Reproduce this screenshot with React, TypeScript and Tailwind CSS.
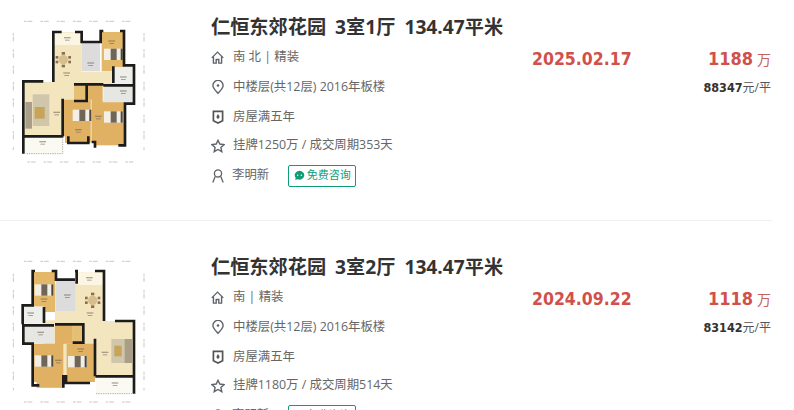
const baseFont = "font-['Open_Sans','Noto_Sans_CJK_SC',sans-serif]";
const numFont = "font-['DejaVu_Sans_Condensed','DejaVu_Sans',sans-serif]";

function HouseIcon() {
  return (
    <svg viewBox="0 0 14 14" className="h-[13px] w-[13px]" fill="none" stroke="#5f6368" strokeWidth="1.500">
      <path d="M.8 7.400 7 1.200l6.200 6.200" />
      <path d="M2.600 5.800V13h3V9.200h2.800V13h3V5.800" />
    </svg>
  );
}

function PinIcon() {
  return (
    <svg viewBox="0 0 14 14" className="h-[14px] w-[14px]" fill="none" stroke="#5f6368" strokeWidth="1.400">
      <path d="M7 13.300C4.400 10.400 1.900 8.200 1.900 5.500a5.100 5.100 0 0 1 10.200 0c0 2.700-2.500 4.900-5.100 7.800Z" />
      <circle cx="7" cy="5.500" r="1.300" fill="#5f6368" stroke="none" />
    </svg>
  );
}

function BadgeIcon() {
  return (
    <svg viewBox="0 0 14 14" className="h-[14px] w-[14px]" fill="none" stroke="#555" strokeWidth="1.700">
      <path d="M2.400 1.300h9.200v9.500L7 13 2.400 10.800Z" />
      <path d="M7 3.800 8.700 7 7 9.200 5.300 7Z" fill="#555" stroke="none" />
    </svg>
  );
}

function StarIcon() {
  return (
    <svg viewBox="0 0 14 14" className="h-[14px] w-[14px]" fill="none" stroke="#5f6368" strokeWidth="1.400">
      <path d="M7 1.300 8.800 5l4.300.5-3.200 2.900.9 4.300L7 10.500l-3.800 2.200.9-4.300L.9 5.500 5.200 5Z" />
    </svg>
  );
}

function UserIcon() {
  return (
    <svg viewBox="0 0 14 14" className="h-[14px] w-[14px]" fill="none" stroke="#5f6368" strokeWidth="1.300">
      <circle cx="7" cy="4.400" r="3.600" />
      <path d="M4.200 7.400 1.800 13.500M9.800 7.400l2.400 6.100" />
    </svg>
  );
}

function ChatIcon() {
  return (
    <svg viewBox="0 0 12 12" className="h-[11px] w-[11px] shrink-0">
      <path d="M6 .8a5.200 4.900 0 1 1-2.300 9.300L1.200 11l.7-2.300A5.200 4.900 0 0 1 6 .8Z" fill="#0f9d78" />
      <circle cx="4" cy="5.700" r=".8" fill="#fff" />
      <circle cx="8" cy="5.700" r=".8" fill="#fff" />
    </svg>
  );
}

function Walls({ d }: { d: string }) {
  return <path d={d} fill="none" stroke="#1c1c1c" strokeWidth="8" />;
}

function Bed({ x, y }: { x: number; y: number }) {
  return (
    <g>
      <rect x={x} y={y} width="56" height="34" fill="#f3efe6" />
      <rect x={x + 20} y={y} width="18" height="34" fill="#6f6658" />
      <rect x={x + 50} y={y} width="6" height="34" fill="#4b463e" />
    </g>
  );
}

function Table({ cx, cy }: { cx: number; cy: number }) {
  return (
    <g fill="#8b6f4c">
      <rect x={cx - 5} y={cy - 23} width="10" height="8" />
      <rect x={cx - 5} y={cy + 15} width="10" height="8" />
      <rect x={cx - 23} y={cy - 11} width="8" height="8" />
      <rect x={cx + 15} y={cy - 11} width="8" height="8" />
      <rect x={cx - 23} y={cy + 3} width="8" height="8" />
      <rect x={cx + 15} y={cy + 3} width="8" height="8" />
      <circle cx={cx} cy={cy} r="14" fill="#d8bd8f" />
    </g>
  );
}

// blurred room name in the plan, unreadable in the reference
function RoomMark({ x, y }: { x: number; y: number }) {
  return (
    <g fill="#6b6255" opacity="0.55">
      <rect x={x} y={y} width="20" height="4" />
      <rect x={x + 3} y={y + 8} width="14" height="3" />
    </g>
  );
}

// both plans are traced from the zoomed reference, 3 units to a pixel
function PlanOne() {
  return (
    <svg viewBox="30 20 450 450" className="h-[150px] w-[150px] blur-[0.4px]">
      <g stroke="#aaa" strokeWidth="2" strokeDasharray="8 3 14 24">
        <path d="M72 33H400M82 455H400M40 68V420M432 68V420" />
      </g>
      <path d="M160 66H245V185H340V225H262V270H375V405H285V395H265V398H195V378H70V215H160Z" fill="#f3e6bf" />
      <rect x="162" y="68" width="80" height="36" fill="#fbf6e4" />
      <rect x="245" y="95" width="55" height="88" fill="#dcdcdc" />
      <path d="M305 65H372V183H305Z" fill="#e3b868" />
      <rect x="338" y="170" width="64" height="50" fill="#eeeeea" />
      <rect x="310" y="226" width="90" height="50" fill="#e6e6e2" />
      <path d="M188 268H272V398H195V378H188Z" fill="#e0b163" />
      <path d="M262 225H308V276H372V405H285V395H275V268H262Z" fill="#e0b163" />
      <rect x="222" y="225" width="36" height="48" fill="#e5bf74" />
      <rect x="72" y="378" width="115" height="52" fill="#fbfaf2" />
      <rect x="98" y="252" width="50" height="95" fill="#cfc6ac" />
      <rect x="104" y="290" width="30" height="35" fill="#c8a45a" />
      <rect x="76" y="275" width="20" height="80" fill="#a99f88" />
      <Table cx={190} cy={148} />
      <Bed x={312} y={115} />
      <Bed x={218} y={298} />
      <Bed x={312} y={303} />
      <RoomMark x={192} y={80} />
      <RoomMark x={190} y={186} />
      <RoomMark x={262} y={156} />
      <RoomMark x={325} y={90} />
      <RoomMark x={160} y={304} />
      <RoomMark x={225} y={356} />
      <RoomMark x={285} y={316} />
      <RoomMark x={118} y={392} />
      <RoomMark x={360} y={198} />
      <RoomMark x={360} y={240} />
      <Walls d="M190 378H70V430M70 378V213H130M160 215V65H185M225 65H245V95H302V62H310M360 62H372V165H402V222M340 168V218M310 225H402V280H375V405H355M285 412V395H275M265 378V398H205V378M188 378V265M222 222H260V272H222M262 222H310" />
      <path d="M80 430H188V378" fill="none" stroke="#8a8a80" strokeWidth="2" strokeDasharray="4 3" />
    </svg>
  );
}

function PlanTwo() {
  return (
    <svg viewBox="30 20 450 450" className="h-[150px] w-[150px] blur-[0.4px]">
      <g stroke="#aaa" strokeWidth="2" strokeDasharray="8 3 14 24">
        <path d="M72 33H400M72 455H400M40 70V420M432 70V420" />
      </g>
      <path d="M230 66H312V212H402V378H285V395H200V378H190V412H110V395H98V280H130V210H165V100H230Z" fill="#f3e6bf" />
      <rect x="230" y="66" width="78" height="38" fill="#fbf6e4" />
      <rect x="168" y="92" width="58" height="90" fill="#dcdcdc" />
      <path d="M98 65H165V185H98Z" fill="#e3b868" />
      <rect x="70" y="168" width="62" height="52" fill="#eeeeea" />
      <rect x="72" y="226" width="90" height="52" fill="#e6e6e2" />
      <path d="M165 225H218V280H190V412H110V395H98V280H165Z" fill="#e0b163" />
      <path d="M200 280H285V395H200Z" fill="#e0b163" />
      <rect x="218" y="225" width="34" height="52" fill="#e5bf74" />
      <rect x="288" y="378" width="112" height="52" fill="#fbfaf2" />
      <rect x="334" y="266" width="50" height="72" fill="#cfc6ac" />
      <rect x="343" y="286" width="22" height="32" fill="#c8a45a" />
      <rect x="374" y="266" width="22" height="72" fill="#a99f88" />
      <Table cx={278} cy={150} />
      <Bed x={104} y={102} />
      <Bed x={104} y={315} />
      <Bed x={204} y={317} />
      <RoomMark x={258} y={80} />
      <RoomMark x={260} y={186} />
      <RoomMark x={192} y={132} />
      <RoomMark x={122} y={144} />
      <RoomMark x={305} y={304} />
      <RoomMark x={165} y={328} />
      <RoomMark x={232} y={294} />
      <RoomMark x={335} y={396} />
      <RoomMark x={82} y={186} />
      <RoomMark x={112} y={244} />
      <Walls d="M286 378H402V430M402 378V212H345M312 212V62H285M230 100V62H225M225 88H168V62H155M105 62H98V165H68V222M132 170V218M162 225H70V280H98V405H118M190 412V378H198V398H270M285 378V265M218 222H250V277H218M165 222H218" />
      <path d="M288 430H396" fill="none" stroke="#8a8a80" strokeWidth="2" strokeDasharray="4 3" />
    </svg>
  );
}

type Listing = {
  title: string;
  facing: string;
  floor: string;
  tag: string;
  deal: string;
  agent: string;
  date: string;
  price: string;
  perMeter: string;
  plan: React.ReactNode;
};

const listings: Listing[] = [
  {
    title: "仁恒东郊花园 3室1厅 134.47平米",
    facing: "南 北 | 精装",
    floor: "中楼层(共12层) 2016年板楼",
    tag: "房屋满五年",
    deal: "挂牌1250万 / 成交周期353天",
    agent: "李明新",
    date: "2025.02.17",
    price: "1188",
    perMeter: "88347",
    plan: <PlanOne />,
  },
  {
    title: "仁恒东郊花园 3室2厅 134.47平米",
    facing: "南 | 精装",
    floor: "中楼层(共12层) 2016年板楼",
    tag: "房屋满五年",
    deal: "挂牌1180万 / 成交周期514天",
    agent: "李明新",
    date: "2024.09.22",
    price: "1118",
    perMeter: "83142",
    plan: <PlanTwo />,
  },
];

function InfoRow({ icon, text, height }: { icon: React.ReactNode; text: string; height: string }) {
  return (
    <div className={`flex items-center ${height}`}>
      <span className="w-[22px] shrink-0">{icon}</span>
      <span className="text-[12.400px] text-[#666]">{text}</span>
    </div>
  );
}

function ListingRow({ item }: { item: Listing }) {
  return (
    <article className="flex h-[221px] w-[772px] border-b border-[#f0f0f0] pt-[17px]">
      <div className="ml-[10px] w-[201px] shrink-0">{item.plan}</div>
      <div className="w-[321px] shrink-0">
        <h2 className="h-[26px] text-[19.200px] leading-[20px] font-bold text-[#333] [word-spacing:4px]">{item.title}</h2>
        <InfoRow height="h-[29px]" icon={<HouseIcon />} text={item.facing} />
        <InfoRow height="h-[30px]" icon={<PinIcon />} text={item.floor} />
        <InfoRow height="h-[30px]" icon={<BadgeIcon />} text={item.tag} />
        <InfoRow height="h-[27px]" icon={<StarIcon />} text={item.deal} />
        <div className="mt-[2px] flex h-[29px] items-center">
          <span className="w-[21px] shrink-0">
            <UserIcon />
          </span>
          <span className="text-[12.400px] text-[#666]">{item.agent}</span>
          <span className="ml-[19px] flex h-[22px] w-[68px] items-center justify-center gap-[2px] rounded-[2px] border border-[#0f9d78] text-[11px] text-[#0f9d78]">
            <ChatIcon />
            免费咨询
          </span>
        </div>
      </div>
      <div className={`w-[130px] shrink-0 pt-[30px] ${numFont} text-[17.500px] leading-[24px] font-bold text-[#d0504a]`}>
        {item.date}
      </div>
      <div className="flex-1 pt-[30px] pr-px text-right">
        <div className="h-[24px] leading-[24px] text-[#d0504a]">
          <span className={`${numFont} text-[18px] font-bold`}>{item.price}</span>
          <span className="ml-[4px] text-[14px] text-[#c4625c]">万</span>
        </div>
        <div className="mt-[8px] text-[12px] leading-[18px] text-[#555]">
          <b className={`${numFont} text-[12.500px] text-[#333]`}>{item.perMeter}</b>元/平
        </div>
      </div>
    </article>
  );
}

export default function App() {
  return (
    <main className={`h-[410px] w-[794px] overflow-hidden bg-white ${baseFont}`}>
      <div className="flex flex-col gap-[19px]">
        {listings.map((item) => (
          <ListingRow key={item.date} item={item} />
        ))}
      </div>
    </main>
  );
}
